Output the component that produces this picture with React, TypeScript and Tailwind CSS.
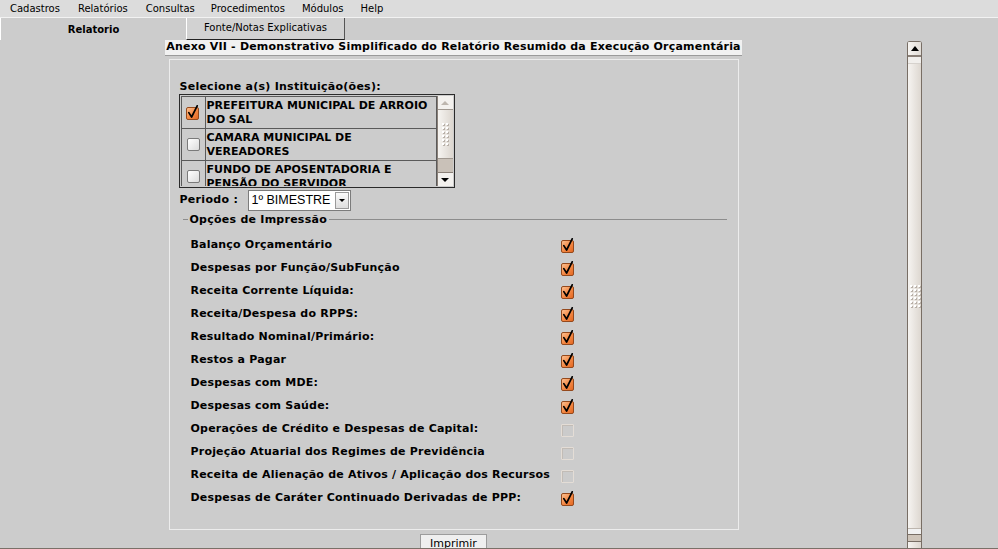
import React from "react";

const CheckedBox = () => (
  <svg width="14" height="16" viewBox="0 0 14 16" className="block">
    <defs>
      <linearGradient id="cbg" x1="0" y1="0" x2="1" y2="1">
        <stop offset="0" stopColor="#fcc497" />
        <stop offset="0.5" stopColor="#f58b47" />
        <stop offset="1" stopColor="#e2651f" />
      </linearGradient>
    </defs>
    <rect x="0.5" y="2.5" width="12" height="12" rx="1.5" fill="url(#cbg)" stroke="#94491d" />
    <path d="M2.8 7.6 L5.6 12 L11.2 0.8" fill="none" stroke="#000" strokeWidth="1.7" strokeLinecap="round" strokeLinejoin="round" />
  </svg>
);

const EmptyBox = () => (
  <div className="w-[13px] h-[13px] rounded-[2px] border border-[#7a7a7a] bg-gradient-to-br from-white to-[#dcdcdc]" />
);

const DisabledBox = () => (
  <div className="w-[13px] h-[13px] mt-[2px] rounded-[1px] border border-[#e4ddd6] bg-[#cbcbcb] shadow-[inset_1px_1px_0_#c2bcb6]" />
);

const Grip = ({ cols, rows }: { cols: number; rows: number }) => (
  <div className="flex flex-col gap-[2px]">
    {Array.from({ length: rows }).map((_, r) => (
      <div key={r} className="flex gap-[2px]">
        {Array.from({ length: cols }).map((_, c) => (
          <div key={c} className="w-[2px] h-[2px] bg-white shadow-[1px_1px_0_#b8b0a8]" />
        ))}
      </div>
    ))}
  </div>
);

const options: [string, boolean][] = [
  ["Balanço Orçamentário", true],
  ["Despesas por Função/SubFunção", true],
  ["Receita Corrente Líquida:", true],
  ["Receita/Despesa do RPPS:", true],
  ["Resultado Nominal/Primário:", true],
  ["Restos a Pagar", true],
  ["Despesas com MDE:", true],
  ["Despesas com Saúde:", true],
  ["Operações de Crédito e Despesas de Capital:", false],
  ["Projeção Atuarial dos Regimes de Previdência", false],
  ["Receita de Alienação de Ativos / Aplicação dos Recursos", false],
  ["Despesas de Caráter Continuado Derivadas de PPP:", true],
];

const institutions: [string, string, boolean][] = [
  ["PREFEITURA MUNICIPAL DE ARROIO", "DO SAL", true],
  ["CAMARA MUNICIPAL DE", "VEREADORES", false],
  ["FUNDO DE APOSENTADORIA E", "PENSÃO DO SERVIDOR", false],
];

export default function App() {
  return (
    <div className="w-[998px] h-[549px] bg-[#cccccc] flex flex-col overflow-hidden font-['DejaVu_Sans',sans-serif] text-black">
      {/* Menu bar */}
      <div className="h-[17px] bg-[#dcdcdc] flex items-center text-[10px] leading-none">
        <span className="ml-[10px]">Cadastros</span>
        <span className="ml-[18px]">Relatórios</span>
        <span className="ml-[18px]">Consultas</span>
        <span className="ml-[16px]">Procedimentos</span>
        <span className="ml-[17px]">Módulos</span>
        <span className="ml-[17px]">Help</span>
      </div>
      {/* Tabs */}
      <div className="h-[23px] flex border-t border-[#f2f2f2]">
        <div className="w-[186px] border-l border-white flex items-center justify-center text-[10px] font-bold">
          Relatorio
        </div>
        <div className="w-[159px] border-l border-white border-r border-r-[#555] border-b border-b-[#222] bg-[#d2d2d2] flex items-center justify-center text-[10px] pb-[2px]">
          Fonte/Notas Explicativas
        </div>
      </div>
      {/* Content */}
      <div className="h-[508px] flex overflow-hidden">
        <div className="w-[907px] flex flex-col items-center">
          <div className="h-[16px] px-[1px] bg-[#f1f1f1] border-b border-[#9a9a9a] flex items-center text-[11px] font-bold tracking-[0.2px] whitespace-nowrap">
            Anexo VII - Demonstrativo Simplificado do Relatório Resumido da Execução Orçamentária
          </div>
          {/* Panel */}
          <div className="mt-[3px] w-[570px] h-[471px] shrink-0 border border-[#ececec] pt-[20px] pl-[9px] flex flex-col">
            <div className="h-[14px] pl-px flex items-center text-[11px] font-bold tracking-[0.25px]">
              Selecione a(s) Instituição(ões):
            </div>
            {/* Listbox */}
            <div className="w-[276px] h-[94px] border border-[#2a2a2a] p-px flex overflow-hidden">
              <div className="flex-1 flex flex-col overflow-hidden">
                {institutions.map(([l1, l2, checked], i) => (
                  <div key={i} className="h-[33px] shrink-0 flex border border-[#5a5a5a] -mb-px">
                    <div className="w-[24px] shrink-0 border-r border-[#5a5a5a] flex items-center justify-center">
                      {checked ? <CheckedBox /> : <EmptyBox />}
                    </div>
                    <div className="pl-px text-[11px] font-bold leading-[14px] pt-[2px] whitespace-nowrap">
                      <div>{l1}</div>
                      <div>{l2}</div>
                    </div>
                  </div>
                ))}
              </div>
              {/* list scrollbar */}
              <div className="w-[16px] shrink-0 flex flex-col border-l border-[#8a8078]">
                <div className="h-[14px] bg-[#f3f1ee] border-b border-[#a09890] flex items-center justify-center">
                  <div className="w-0 h-0 border-l-[4px] border-r-[4px] border-b-[4px] border-l-transparent border-r-transparent border-b-[#bdb6ae]" />
                </div>
                <div className="h-[49px] bg-gradient-to-r from-[#f6f4f1] to-[#dcd6cf] border-b border-[#a09890] flex items-center justify-center">
                  <Grip cols={2} rows={6} />
                </div>
                <div className="flex-1 bg-[#c9c1b8]" />
                <div className="h-[14px] bg-[#f3f1ee] border-t border-[#8a8078] flex items-center justify-center">
                  <div className="w-0 h-0 border-l-[4px] border-r-[4px] border-t-[4px] border-l-transparent border-r-transparent border-t-black" />
                </div>
              </div>
            </div>
            {/* Periodo */}
            <div className="mt-[2px] h-[21px] flex items-center pl-px">
              <span className="text-[11px] font-bold tracking-[0.3px] w-[68px]">Periodo :</span>
              <div className="w-[103px] h-[21px] bg-white border border-[#7c7c7c] flex items-center">
                <span className="ml-[3px] font-['Liberation_Sans',Arial,sans-serif] text-[12.5px] leading-none flex-1">1º BIMESTRE</span>
                <div className="w-[14px] h-[17px] mr-px bg-gradient-to-b from-[#fafafa] to-[#dedede] border border-[#9a9a9a] flex items-center justify-center">
                  <div className="w-0 h-0 border-l-[3px] border-r-[3px] border-t-[3px] border-l-transparent border-r-transparent border-t-black" />
                </div>
              </div>
            </div>
            {/* Fieldset legend */}
            <div className="mt-[1px] h-[15px] flex items-center pl-[4px] pr-[11px]">
              <div className="w-[5px] h-px bg-[#8c8c8c]" />
              <span className="px-[2px] text-[11px] font-bold tracking-[0.25px] leading-none">Opções de Impressão</span>
              <div className="flex-1 h-px bg-[#8c8c8c]" />
            </div>
            {/* Options */}
            <div className="mt-[7px] pl-[12px] flex flex-col">
              {options.map(([label, enabled], i) => (
                <div key={i} className="h-[23px] flex items-center">
                  <span className="w-[370px] text-[11px] font-bold tracking-[0.2px] whitespace-nowrap">{label}</span>
                  {enabled ? <CheckedBox /> : <DisabledBox />}
                </div>
              ))}
            </div>
          </div>
          <div className="mt-[4px] w-[67px] h-[20px] shrink-0 border border-[#9c9c9c] bg-[#efefef] flex justify-center pt-[3px] text-[11px] leading-none">
            Imprimir
          </div>
        </div>
        {/* Main scrollbar */}
        <div className="w-[15px] mt-px flex flex-col border-x border-[#786e65] rounded-t-[3px] overflow-hidden">
          <div className="h-[14px] shrink-0 bg-gradient-to-r from-[#f7f5f2] to-[#e2ddd7] flex items-center justify-center border-t border-[#786e65]">
            <div className="w-0 h-0 border-l-[4px] border-r-[4px] border-b-[5px] border-l-transparent border-r-transparent border-b-black" />
          </div>
          <div className="h-[2px] shrink-0 bg-[#8a8078]" />
          <div className="h-[7px] shrink-0 bg-[#f1efec] border-b border-[#d6d2cd]" />
          <div className="h-[465px] shrink-0 bg-gradient-to-r from-[#f6f4f1] to-[#ddd7d0] border-b border-[#bdb6ae] flex items-center justify-center">
            <Grip cols={3} rows={6} />
          </div>
          <div className="h-[5px] shrink-0 bg-[#f1f1f1]" />
          <div className="h-[8px] shrink-0 bg-[#cfc5ba] border-y border-[#786e65]" />
          <div className="flex-1 bg-gradient-to-r from-[#f6f4f1] to-[#ddd7d0]" />
        </div>
        <div className="flex-1" />
      </div>
      <div className="h-px bg-[#7a7068]" />
    </div>
  );
}
